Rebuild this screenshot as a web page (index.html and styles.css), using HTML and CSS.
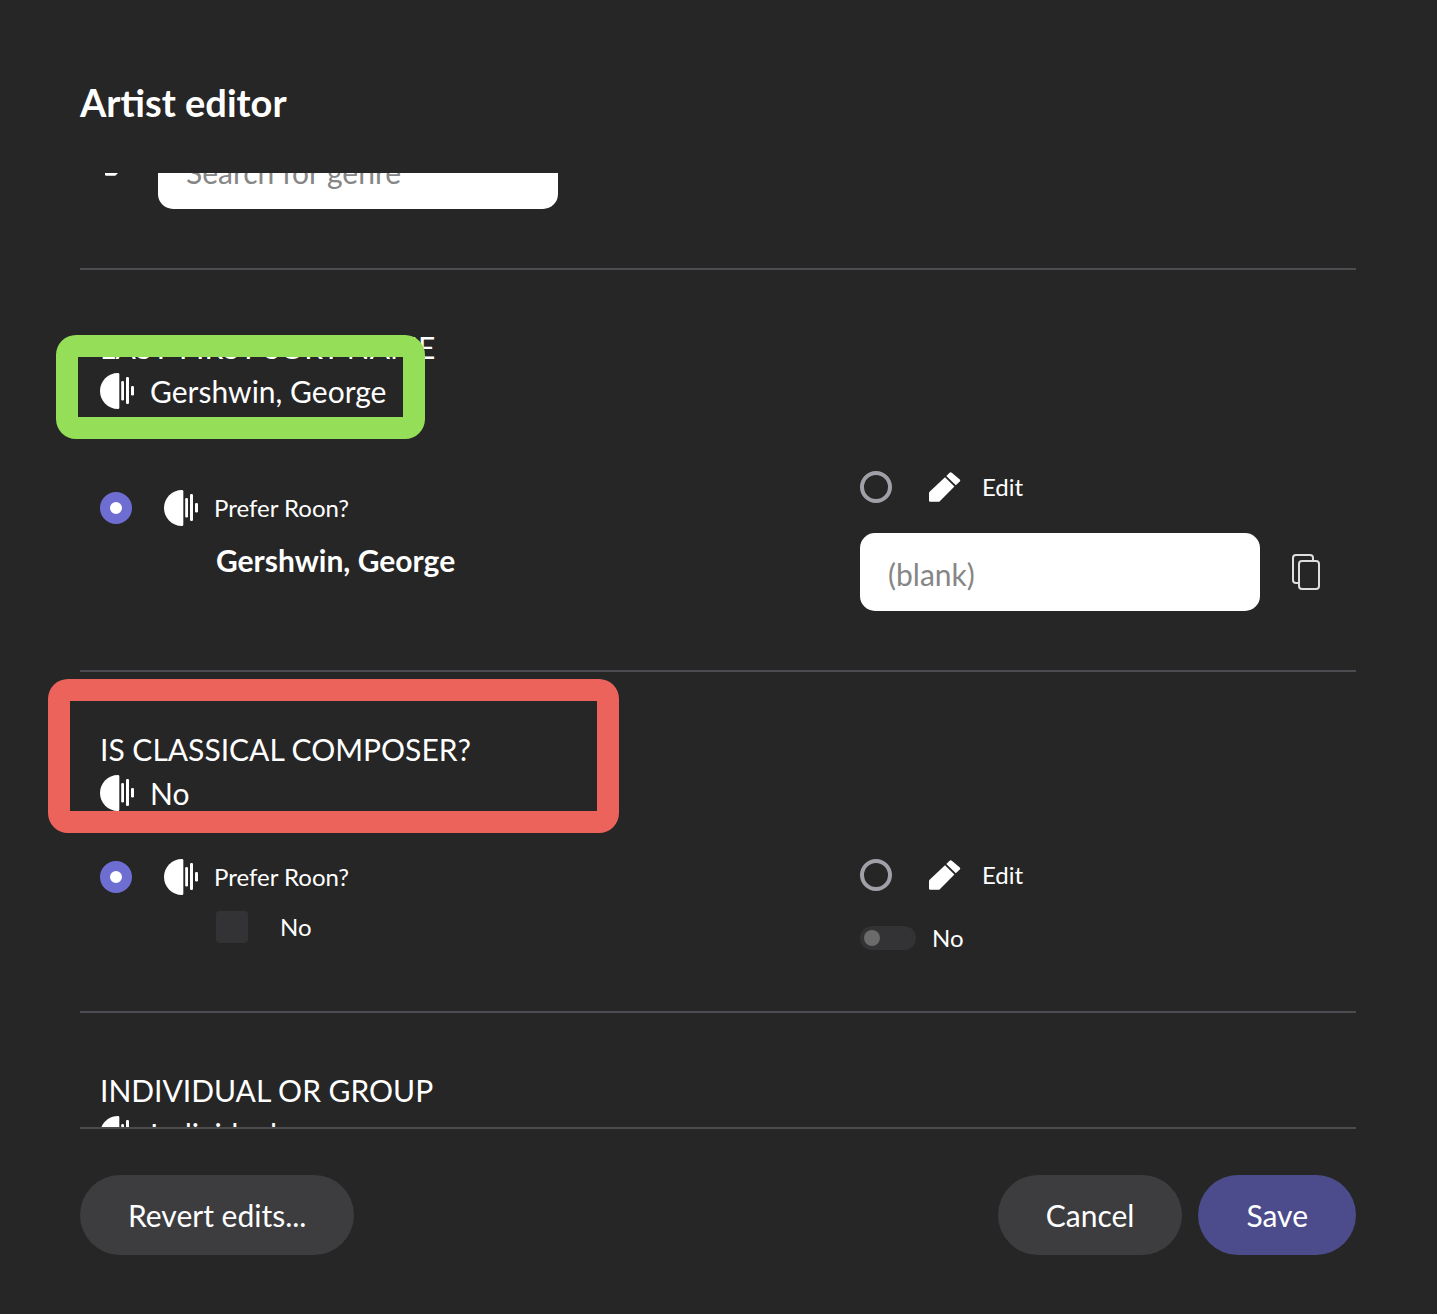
FILE: index.html
```html
<!DOCTYPE html>
<html lang="en">
<head>
    <meta charset="UTF-8">
    <meta name="viewport" content="width=device-width, initial-scale=1.0">
    <title>Artist editor</title>
    <link rel="stylesheet" href="styles.css">
</head>
<body>

<!-- Shared icons -->
<svg class="sprite" aria-hidden="true">
    <symbol id="icon-roon" viewBox="0 0 34 36">
        <path d="M18 0C8 0 0 8 0 18s8 18 18 18q1.300 0 1.300-1.300V1.300Q19.300 0 18 0z"/>
        <rect x="21.200" y="8" width="2.800" height="19.500" rx="1.200"/>
        <rect x="26" y="4" width="3" height="27" rx="1.200"/>
        <rect x="31" y="13" width="3" height="9.500" rx="1.200"/>
    </symbol>
    <symbol id="icon-pencil" viewBox="0 0 42 32">
        <path d="M21 6.300L30.400 15.600 15.800 30.200Q15.200 30.800 14.400 30.800H6.200Q5 30.800 5 29.600V22.200Q5 21.400 5.600 20.800z"/>
        <path d="M22.300 4.900L25.600 1.700Q26.700 .700 27.800 1.700L35.800 8.600Q36.800 9.600 35.800 10.600L31.800 14.300z"/>
    </symbol>
    <symbol id="icon-copy" viewBox="0 0 28 36">
        <path d="M6 29H4Q1 29 1 26V4Q1 1 4 1H18Q21 1 21 4V6"/>
        <rect x="7" y="7" width="20" height="28" rx="3"/>
    </symbol>
</svg>

<div class="editor">
    <header class="editor-header">
        <h1>Artist editor</h1>
    </header>

    <main class="editor-body">
        <div class="sections">

            <section class="section">
                <div class="genre-row">
                    <svg class="pencil"><use href="#icon-pencil"/></svg>
                    <input type="text" class="text-input" placeholder="Search for genre" aria-label="Search for genre">
                </div>
            </section>

            <section class="section">
                <h2>LAST-FIRST SORT NAME</h2>
                <p class="current"><svg class="roon"><use href="#icon-roon"/></svg>Gershwin, George</p>
                <div class="options options-text">
                    <div class="prefer">
                        <label class="prefer-head">
                            <input type="radio" name="sortName" checked>
                            <svg class="roon"><use href="#icon-roon"/></svg>
                            <span>Prefer Roon?</span>
                        </label>
                        <strong class="prefer-value">Gershwin, George</strong>
                    </div>
                    <div class="edit">
                        <label class="edit-head">
                            <input type="radio" name="sortName">
                            <svg class="pencil"><use href="#icon-pencil"/></svg>
                            <span>Edit</span>
                        </label>
                        <div class="edit-row">
                            <input type="text" class="text-input" placeholder="(blank)" aria-label="Last-first sort name">
                            <button type="button" class="copy-button" aria-label="Copy">
                                <svg class="copy"><use href="#icon-copy"/></svg>
                            </button>
                        </div>
                    </div>
                </div>
                <div class="mark mark-green"></div>
            </section>

            <section class="section section-toggle">
                <h2>IS CLASSICAL COMPOSER?</h2>
                <p class="current"><svg class="roon"><use href="#icon-roon"/></svg>No</p>
                <div class="options">
                    <div class="prefer">
                        <label class="prefer-head">
                            <input type="radio" name="composer" checked>
                            <svg class="roon"><use href="#icon-roon"/></svg>
                            <span>Prefer Roon?</span>
                        </label>
                        <label class="prefer-value check-row">
                            <input type="checkbox" class="checkbox" disabled>
                            <span>No</span>
                        </label>
                    </div>
                    <div class="edit">
                        <label class="edit-head">
                            <input type="radio" name="composer">
                            <svg class="pencil"><use href="#icon-pencil"/></svg>
                            <span>Edit</span>
                        </label>
                        <label class="toggle-row">
                            <input type="checkbox" class="toggle">
                            <span>No</span>
                        </label>
                    </div>
                </div>
                <div class="mark mark-red"></div>
            </section>

            <section class="section">
                <h2>INDIVIDUAL OR GROUP</h2>
                <p class="current"><svg class="roon"><use href="#icon-roon"/></svg>Individual</p>
            </section>

        </div>
    </main>

    <footer class="editor-footer">
        <button type="button" class="button">Revert edits...</button>
        <div class="actions">
            <button type="button" class="button">Cancel</button>
            <button type="button" class="button button-primary">Save</button>
        </div>
    </footer>
</div>

</body>
</html>
```
FILE: styles.css
```css
* {
    box-sizing: border-box;
}
body {
    margin: 0;
    font-family: Lato, "Open Sans", sans-serif;
    font-size: 24px;
    line-height: 32px;
    background-color: #262626;
    color: #fff;
}
h1, h2, p {
    margin: 0;
}
input, button {
    font-family: inherit;
    margin: 0;
}
.sprite {
    display: none;
}
.editor {
    display: flex;
    flex-direction: column;
    height: 100vh;
    padding: 0 1px 0 0;
}

/* Header */
.editor-header {
    padding: 78px 80px 47px;
}
h1 {
    font-size: 38px;
    line-height: 48px;
    font-weight: bold;
}

.editor-body {
    flex: 1;
    min-height: 0;
    overflow: hidden;
    padding: 0 80px;
}
.sections {
    margin-top: -42px;
}
.section {
    position: relative;
    padding: 55px 20px 59px;
    border-bottom: 2px solid #4c4c50;
}
.section:first-child {
    padding-top: 0;
}
.section-toggle {
    padding-bottom: 56px;
}
h2, .current {
    font-size: 30px;
    line-height: 44px;
    font-weight: normal;
}
.current {
    display: flex;
    align-items: center;
    gap: 16px;
}
.genre-row {
    display: flex;
    align-items: flex-start;
    gap: 16px;
}
.genre-row .pencil {
    margin-top: 14px;
}

/* Prefer / Edit columns */
.options {
    display: grid;
    grid-template-columns: 1fr 476px;
    align-items: start;
    margin-top: 44px;
}
.options-text {
    align-items: center;
}
.options-text .edit {
    padding-top: 14px;
}
.prefer {
    display: flex;
    flex-direction: column;
    align-items: flex-start;
    gap: 16px;
}
.prefer-head, .edit-head {
    display: flex;
    align-items: center;
}
.prefer-head .roon, .edit-head .pencil {
    margin: 0 16px 0 32px;
}
.prefer-value {
    margin-left: 116px;
    font-size: 30px;
    line-height: 36px;
}
.edit {
    display: flex;
    flex-direction: column;
    align-items: flex-start;
    gap: 30px;
}
.edit-row {
    display: flex;
    align-items: center;
    gap: 32px;
}
.check-row {
    display: flex;
    align-items: center;
    gap: 32px;
    font-size: 24px;
    line-height: 32px;
}
.toggle-row {
    display: flex;
    align-items: center;
    gap: 16px;
    height: 34px;
}

/* Controls */
input[type="radio"], .checkbox, .toggle {
    appearance: none;
    flex: none;
}
input[type="radio"] {
    width: 32px;
    height: 32px;
    border: 4px solid #a0a0a8;
    border-radius: 50%;
}
input[type="radio"]:checked {
    border: 10px solid #6e6ed2;
    background-color: #fff;
}
.checkbox {
    width: 32px;
    height: 32px;
    border-radius: 4px;
    background-color: #333335;
}
.toggle {
    display: flex;
    align-items: center;
    width: 56px;
    height: 24px;
    padding: 0 4px;
    border-radius: 12px;
    background-color: #333335;
}
.toggle::before {
    content: "";
    width: 16px;
    height: 16px;
    border-radius: 50%;
    background-color: #6b6b6b;
}
.toggle:checked {
    justify-content: flex-end;
}
.text-input {
    width: 400px;
    height: 78px;
    padding: 3px 28px 0;
    border: none;
    border-radius: 15px;
    font-size: 30px;
    background-color: #fff;
    color: #262626;
}
.text-input::placeholder {
    color: #868686;
}
.copy-button {
    padding: 0;
    border: none;
    background: none;
}

/* Icons */
.roon, .pencil, .copy {
    display: block;
    flex: none;
    fill: #fff;
}
.roon {
    width: 34px;
    height: 36px;
}
.pencil {
    width: 42px;
    height: 32px;
}
.copy {
    width: 28px;
    height: 36px;
    fill: none;
    stroke: #dedede;
    stroke-width: 2;
}

/* Highlight frames over the fields */
.mark {
    position: absolute;
    border: 22px solid;
    border-radius: 20px;
    pointer-events: none;
}
.mark-green {
    left: -24px;
    top: 65px;
    width: 369px;
    height: 104px;
    border-color: #94de58;
}
.mark-red {
    left: -32px;
    top: 7px;
    width: 571px;
    height: 154px;
    border-color: #ec635c;
}

/* Footer */
.editor-footer {
    display: flex;
    justify-content: space-between;
    margin: 0 80px;
    padding: 46px 0 59px;
    border-top: 2px solid #4c4c50;
}
.actions {
    display: flex;
    gap: 16px;
}
.button {
    height: 80px;
    padding: 0 48px;
    border: none;
    border-radius: 40px;
    font-size: 30px;
    background-color: #3d3d3f;
    color: #fff;
    cursor: pointer;
}
.button-primary {
    background-color: #4c4c8c;
}
```
